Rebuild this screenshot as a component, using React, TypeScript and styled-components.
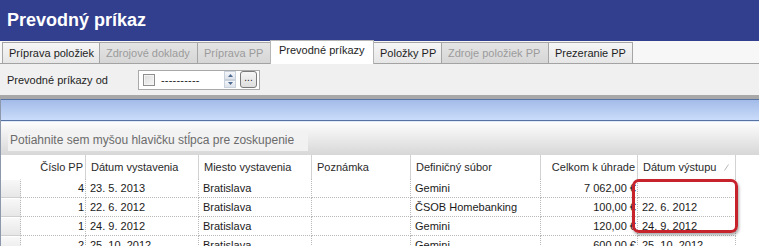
import React from 'react';
import styled, { createGlobalStyle } from 'styled-components';

const GlobalStyle = createGlobalStyle`
  html, body {
    margin: 0;
    padding: 0;
    background: #ffffff;
    overflow: hidden;
  }
  body {
    font-family: 'Liberation Sans', Arial, sans-serif;
    font-size: 11px;
    color: #1e1e1e;
  }
`;

const Window = styled.div`
  width: 759px;
  height: 246px;
  overflow: hidden;
  display: flex;
  flex-direction: column;
`;

const TitleBar = styled.div`
  flex: none;
  height: 41px;
  background: #323f8f;
  color: #ffffff;
  font-size: 18px;
  font-weight: bold;
  display: flex;
  align-items: center;
  padding-left: 7px;
`;

const TabStrip = styled.div`
  flex: none;
  height: 22px;
  display: flex;
  align-items: flex-end;
  padding-left: 2px;
  background: #f7f7f7;
  border-bottom: 1px solid #a3a3a3;
`;

const Tab = styled.div<{ $w: number; $active?: boolean; $disabled?: boolean }>`
  box-sizing: border-box;
  width: ${(p) => p.$w}px;
  height: ${(p) => (p.$active ? 24 : 21)}px;
  margin-bottom: ${(p) => (p.$active ? -1 : 0)}px;
  margin-right: -1px;
  border: 1px solid ${(p) => (p.$active ? '#b5b5b5' : '#a5a5a5')};
  border-bottom: none;
  background: ${(p) =>
    p.$active
      ? '#ffffff'
      : p.$disabled
      ? 'linear-gradient(#e4e4e4, #d6d6d6)'
      : 'linear-gradient(#f6f6f6, #e6e6e6)'};
  color: ${(p) => (p.$disabled ? '#9b9b9b' : '#1e1e1e')};
  display: flex;
  align-items: ${(p) => (p.$active ? 'flex-start' : 'center')};
  padding: ${(p) => (p.$active ? '3px 0 0 8px' : '0 0 0 6px')};
  white-space: nowrap;
  position: relative;
  z-index: ${(p) => (p.$active ? 2 : 1)};
`;

const FilterPanel = styled.div`
  flex: none;
  height: 31px;
  background: #f0f0f0;
  display: flex;
  align-items: center;
  padding-left: 7px;
`;

const FilterLabel = styled.span`
  width: 131px;
`;

const DatePicker = styled.div`
  box-sizing: border-box;
  width: 122px;
  height: 20px;
  border: 1px solid #a9a9a9;
  background: #ffffff;
  display: flex;
  align-items: center;
  padding-left: 4px;
`;

const CheckBox = styled.span`
  box-sizing: border-box;
  width: 12px;
  height: 12px;
  border: 1px solid #8e8f8f;
  background: linear-gradient(135deg, #dcdcdc, #f7f7f7);
  box-shadow: inset 0 0 0 1px #f4f4f4;
  margin-right: 6px;
`;

const Dashes = styled.span`
  flex: 1;
  letter-spacing: 0.2px;
`;

const Spinner = styled.div`
  width: 12px;
  height: 17px;
  display: flex;
  flex-direction: column;
  margin-right: 4px;
`;

const SpinHalf = styled.div`
  flex: 1;
  border: 1px solid #c9d2dc;
  background: linear-gradient(#f4f6f9, #dde3ea);
  display: flex;
  align-items: center;
  justify-content: center;
`;

const EllipsisButton = styled.div`
  box-sizing: border-box;
  width: 17px;
  height: 17px;
  margin-right: 2px;
  border: 1px solid #7a7a7a;
  border-radius: 3px;
  background: linear-gradient(#f5f5f5, #dedede);
  font-size: 10px;
  line-height: 12px;
  text-align: center;
`;

const Divider = styled.div`
  flex: none;
  height: 4px;
  background: #a8a8a8;
`;

const Lower = styled.div`
  flex: 1;
  display: flex;
  flex-direction: column;
  border-left: 1px solid #8d98ad;
`;

const BlueBand = styled.div`
  flex: none;
  height: 20px;
  border-top: 1px solid #5673a3;
  border-bottom: 1px solid #5673a3;
  background: linear-gradient(#a3bbe8, #cadcfa);
`;

const GroupPanel = styled.div`
  flex: none;
  box-sizing: border-box;
  height: 34px;
  padding: 8px 0 0 7px;
  background: linear-gradient(#fdfdfd, #d7d7d7);
  border-top: 1px solid #dfe9f7;
`;

const DragBox = styled.div`
  width: 300px;
  height: 21px;
  line-height: 21px;
  padding-left: 2px;
  box-sizing: border-box;
  background: rgba(242, 242, 242, 0.92);
  color: #6b6b6b;
  font-size: 12px;
  white-space: nowrap;
`;

const GridArea = styled.div`
  position: relative;
  flex: 1;
  background: #ffffff;
`;

const Grid = styled.div`
  display: grid;
  grid-template-columns: 20px 65px 113px 113px 99px 130px 97px 98px 1fr;
  grid-auto-rows: 19px;
  grid-template-rows: 24px;
`;

const HeaderCell = styled.div<{ $align?: 'left' | 'right'; $sep?: boolean }>`
  box-sizing: border-box;
  display: flex;
  align-items: center;
  justify-content: ${(p) => (p.$align === 'right' ? 'flex-end' : 'flex-start')};
  padding: 0 ${(p) => (p.$align === 'right' ? 2 : 5)}px 0 5px;
  border-right: ${(p) => (p.$sep ? '1px solid #d2d2d2' : 'none')};
  background: #ffffff;
  color: #2a2a2a;
  white-space: nowrap;
  overflow: hidden;
`;

const RowHeader = styled.div`
  box-sizing: border-box;
  background: linear-gradient(#f8f8f8, #e7e7e7);
  border-top: 1px solid #ffffff;
  border-bottom: 1px solid #cfcfcf;
  border-right: 1px dotted #b9b9b9;
`;

const Cell = styled.div<{ $align?: 'left' | 'right' }>`
  box-sizing: border-box;
  line-height: 18px;
  padding: 0 ${(p) => (p.$align === 'right' ? 1 : 3)}px 0 4px;
  text-align: ${(p) => p.$align ?? 'left'};
  border-right: 1px dotted #b9b9b9;
  border-bottom: 1px dotted #b9b9b9;
  white-space: nowrap;
  overflow: hidden;
  color: #1a1a1a;
`;

const Filler = styled.div`
  background: #ffffff;
`;

const SortMark = styled.svg`
  margin-left: 8px;
  flex: none;
`;

const Highlight = styled.div`
  position: absolute;
  left: 631px;
  top: 24px;
  width: 106px;
  height: 54px;
  box-sizing: border-box;
  border: 3px solid #c7232c;
  border-radius: 7px;
  box-shadow: 1px 2px 3px rgba(0, 0, 0, 0.35);
  pointer-events: none;
`;

type Row = {
  cislo: string;
  datum: string;
  miesto: string;
  poznamka: string;
  subor: string;
  celkom: string;
  vystup: string;
};

const rows: Row[] = [
  { cislo: '4', datum: '23. 5. 2013', miesto: 'Bratislava', poznamka: '', subor: 'Gemini', celkom: '7 062,00 €', vystup: '' },
  { cislo: '1', datum: '22. 6. 2012', miesto: 'Bratislava', poznamka: '', subor: 'ČSOB Homebanking', celkom: '100,00 €', vystup: '22. 6. 2012' },
  { cislo: '1', datum: '24. 9. 2012', miesto: 'Bratislava', poznamka: '', subor: 'Gemini', celkom: '120,00 €', vystup: '24. 9. 2012' },
  { cislo: '2', datum: '25. 10. 2012', miesto: 'Bratislava', poznamka: '', subor: 'Gemini', celkom: '600,00 €', vystup: '25. 10. 2012' },
];

const tabs = [
  { label: 'Príprava položiek', w: 98 },
  { label: 'Zdrojové doklady', w: 99, disabled: true },
  { label: 'Príprava PP', w: 74, disabled: true },
  { label: 'Prevodné príkazy', w: 104, active: true },
  { label: 'Položky PP', w: 69 },
  { label: 'Zdroje položiek PP', w: 108, disabled: true },
  { label: 'Prezeranie PP', w: 85 },
];

export default function App() {
  return (
    <Window>
      <GlobalStyle />
      <TitleBar>Prevodný príkaz</TitleBar>

      <TabStrip>
        {tabs.map((t) => (
          <Tab key={t.label} $w={t.w} $active={t.active} $disabled={t.disabled}>
            {t.label}
          </Tab>
        ))}
      </TabStrip>

      <FilterPanel>
        <FilterLabel>Prevodné príkazy od</FilterLabel>
        <DatePicker>
          <CheckBox />
          <Dashes>----------</Dashes>
          <Spinner>
            <SpinHalf>
              <svg width="5" height="3" viewBox="0 0 5 3">
                <path d="M0 3 L2.5 0 L5 3 Z" fill="#4d6a92" />
              </svg>
            </SpinHalf>
            <SpinHalf>
              <svg width="5" height="3" viewBox="0 0 5 3">
                <path d="M0 0 L2.5 3 L5 0 Z" fill="#4d6a92" />
              </svg>
            </SpinHalf>
          </Spinner>
          <EllipsisButton>...</EllipsisButton>
        </DatePicker>
      </FilterPanel>

      <Divider />

      <Lower>
        <BlueBand />
        <GroupPanel>
          <DragBox>Potiahnite sem myšou hlavičku stĺpca pre zoskupenie</DragBox>
        </GroupPanel>

        <GridArea>
          <Grid>
            <HeaderCell />
            <HeaderCell $align="right" $sep>Číslo PP</HeaderCell>
            <HeaderCell $sep>Dátum vystavenia</HeaderCell>
            <HeaderCell $sep>Miesto vystavenia</HeaderCell>
            <HeaderCell $sep>Poznámka</HeaderCell>
            <HeaderCell $sep>Definičný súbor</HeaderCell>
            <HeaderCell $align="right" $sep>Celkom k úhrade</HeaderCell>
            <HeaderCell $sep>
              Dátum výstupu
              <SortMark width="5" height="7" viewBox="0 0 5 7">
                <path d="M0.5 6.5 L4.5 0.5" stroke="#b8b8b8" strokeWidth="1" fill="none" />
              </SortMark>
            </HeaderCell>
            <HeaderCell />

            {rows.map((r, i) => (
              <React.Fragment key={i}>
                <RowHeader />
                <Cell $align="right">{r.cislo}</Cell>
                <Cell>{r.datum}</Cell>
                <Cell>{r.miesto}</Cell>
                <Cell>{r.poznamka}</Cell>
                <Cell>{r.subor}</Cell>
                <Cell $align="right">{r.celkom}</Cell>
                <Cell>{r.vystup}</Cell>
                <Filler />
              </React.Fragment>
            ))}
          </Grid>
          <Highlight />
        </GridArea>
      </Lower>
    </Window>
  );
}
